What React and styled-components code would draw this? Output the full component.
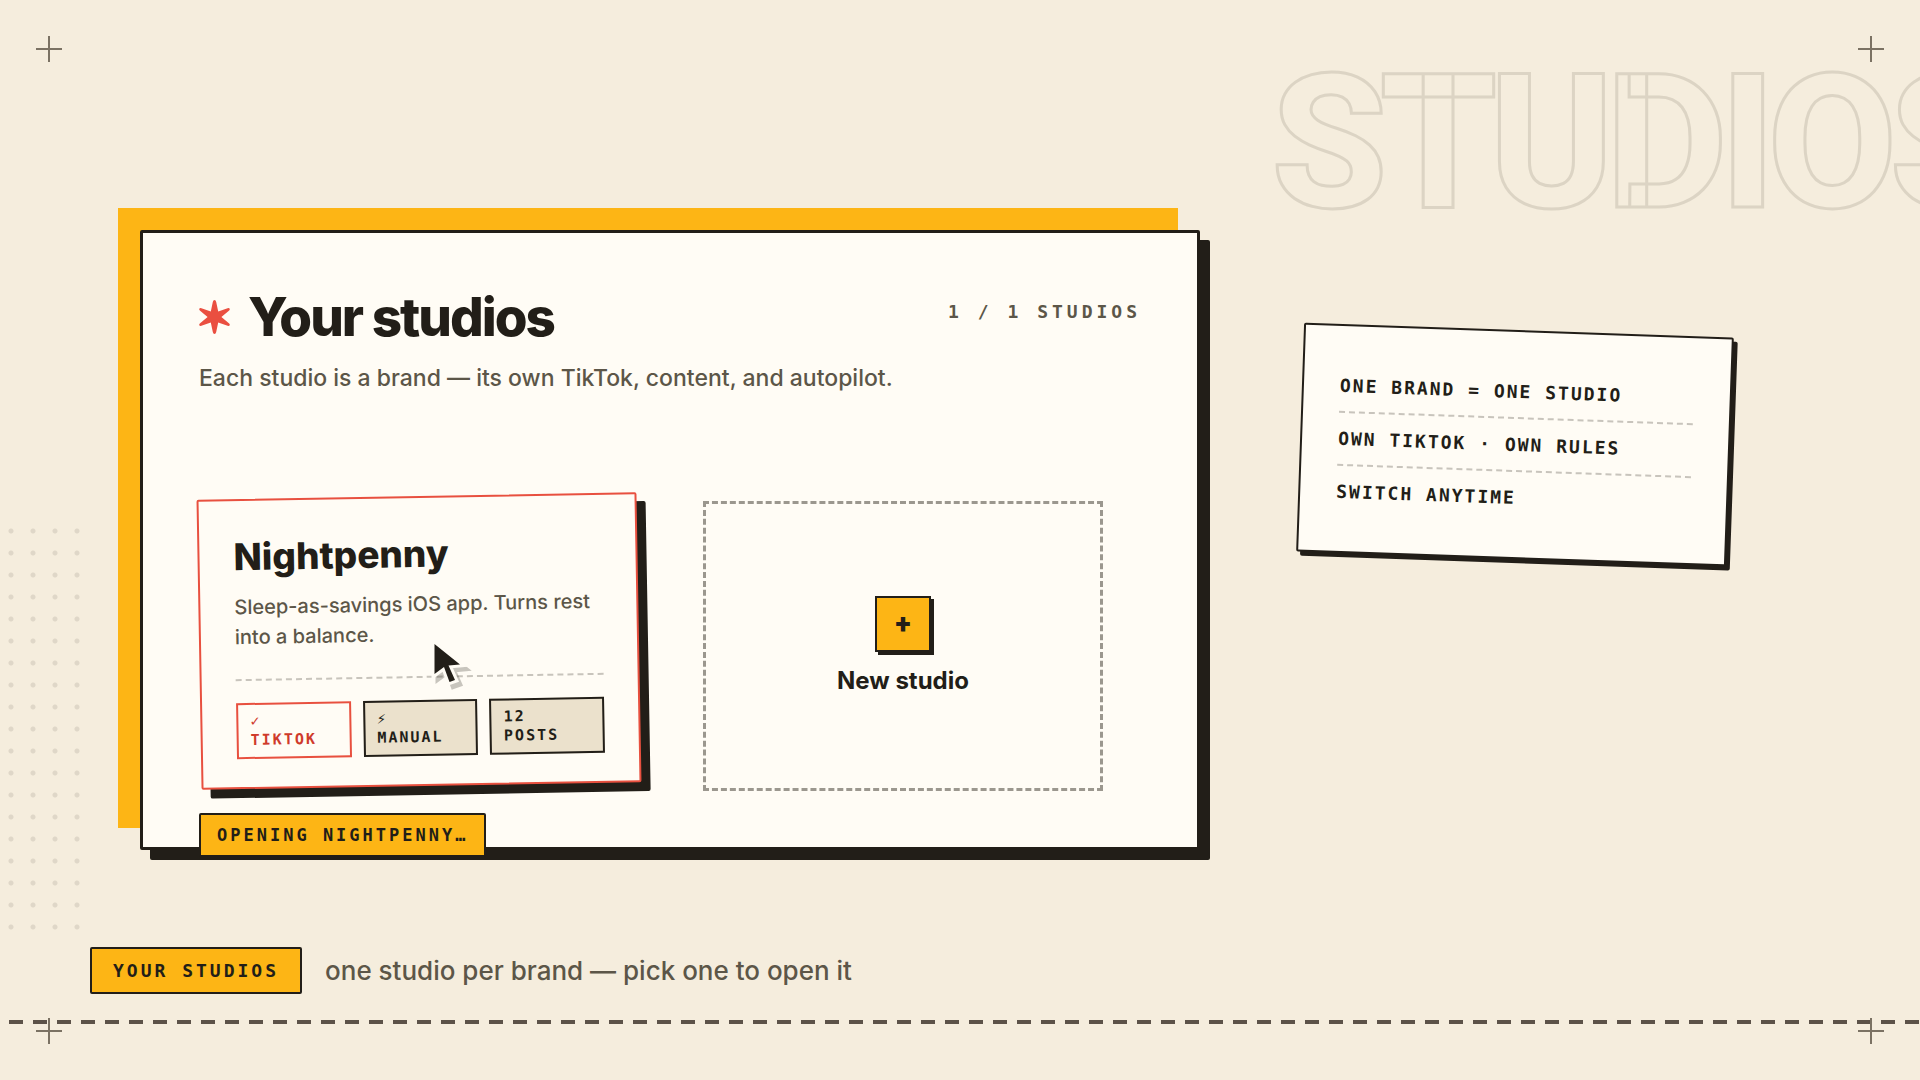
import styled, { createGlobalStyle } from 'styled-components'

const ink = '#221e18'
const paper = '#fffcf5'
const amber = '#fdb515'
const coral = '#e8503f'
const muted = '#5c5648'

const GlobalStyle = createGlobalStyle`
  body {
    margin: 0;
    background: #f5eddd;
    color: ${ink};
    font-family: Inter, 'Liberation Sans', sans-serif;
    font-weight: 500;
  }
  * {
    box-sizing: border-box;
  }
`

const mono = `
  font-family: 'DejaVu Sans Mono', 'Liberation Mono', monospace;
  font-weight: 700;
  text-transform: uppercase;
`

const Page = styled.div`
  position: relative;
  min-height: 100vh;
  display: flex;
  flex-direction: column;
  overflow: hidden;
`

const Backdrop = styled.div`
  position: absolute;
  top: 31px;
  left: 1271px;
  font-family: Roboto, 'Liberation Sans', sans-serif;
  font-size: 188px;
  line-height: 224px;
  font-weight: 800;
  letter-spacing: -8px;
  white-space: nowrap;
  color: transparent;
  -webkit-text-stroke: 3px #dcd4c4;
`

const Dots = styled.div`
  position: absolute;
  left: 0;
  top: 520px;
  width: 88px;
  height: 418px;
  background: radial-gradient(circle, #dfd7c8 2px, transparent 3px) 0 0 / 22px 22px;
`

const Cross = styled.svg`
  position: absolute;
  width: 26px;
  height: 26px;
  ${({ $v }) => $v}: 36px;
  ${({ $h }) => $h}: 36px;
  stroke: #7b7263;
  stroke-width: 2;
`

const Main = styled.main`
  position: relative;
  display: grid;
  grid-template-columns: minmax(0, 106fr) minmax(0, 43fr);
  column-gap: 100px;
  align-items: start;
  padding: 230px 190px 0 140px;
`

const PanelWrap = styled.div`
  position: relative;
  z-index: 0;
`

const Panel = styled.section`
  position: relative;
  padding: 56px;
  background: ${paper};
  border: 3px solid ${ink};
  border-radius: 2px;
  box-shadow: 10px 10px 0 ${ink};

  &::before {
    content: '';
    position: absolute;
    z-index: -1;
    inset: -25px 19px 19px -25px;
    background: ${amber};
  }
`

const Header = styled.header`
  display: flex;
  justify-content: space-between;
  align-items: flex-start;
`

const Title = styled.h1`
  display: flex;
  align-items: center;
  gap: 18px;
  margin: 0;
  font-size: 53px;
  line-height: 56px;
  font-weight: 800;
  letter-spacing: -2px;
`

const Star = styled.svg`
  width: 31px;
  height: 34px;
  fill: #ea4f40;
`

const Count = styled.span`
  ${mono}
  padding-top: 10px;
  font-size: 18px;
  line-height: 26px;
  letter-spacing: 4px;
  color: ${muted};
`

const Lead = styled.p`
  margin: 17px 0 0;
  font-size: 23px;
  line-height: 32px;
  color: ${muted};
`

const Cards = styled.div`
  display: grid;
  grid-template-columns: 440fr 400fr;
  gap: 64px;
  margin-top: 107px;
  padding-right: 38px;
`

const StudioCard = styled.article`
  padding: 36px 34px 28px;
  background: ${paper};
  border: 2px solid ${coral};
  border-radius: 2px;
  box-shadow: 9px 9px 0 ${ink};
  transform: translateY(-5px) rotate(-1deg);
`

const StudioName = styled.h2`
  margin: 0;
  font-size: 37px;
  line-height: 40px;
  font-weight: 800;
`

const About = styled.p`
  margin: 15px 0 0;
  font-size: 20px;
  line-height: 30px;
  color: ${muted};
`

const Chips = styled.ul`
  display: flex;
  gap: 12px;
  margin: 27px 0 0;
  padding: 22px 0 0;
  border-top: 2px dashed #c8c4bc;
  list-style: none;
`

const Chip = styled.li`
  ${mono}
  flex: 1 1 0;
  padding: 7px 12px;
  font-size: 15px;
  line-height: 19px;
  letter-spacing: 2px;
  border: 2px solid ${({ $on }) => ($on ? coral : ink)};
  background: ${({ $on }) => ($on ? paper : '#ebe1cc')};
  color: ${({ $on }) => ($on ? '#cf3a2b' : ink)};

  span {
    display: block;
  }
`

const NewStudio = styled.button`
  display: flex;
  flex-direction: column;
  align-items: center;
  justify-content: center;
  gap: 14px;
  border: 3px dashed #9b978e;
  background: none;
  color: ${ink};
  font: 700 24px/30px Inter, 'Liberation Sans', sans-serif;
  cursor: pointer;
`

const Plus = styled.span`
  width: 56px;
  height: 56px;
  border: 2px solid ${ink};
  background: ${amber};
  box-shadow: 3px 3px 0 ${ink};
  font-family: Roboto, 'Liberation Sans', sans-serif;
  font-size: 28px;
  line-height: 52px;
  font-weight: 900;
`

const Tag = styled.span`
  ${mono}
  border: 2px solid ${ink};
  border-radius: 2px;
  background: ${amber};
  padding: ${({ $large }) => ($large ? '10px 21px' : '9px 16px')};
  font-size: ${({ $large }) => ($large ? 18 : 17)}px;
  line-height: ${({ $large }) => ($large ? 23 : 22)}px;
  letter-spacing: 3px;
  white-space: nowrap;
`

const Toast = styled(Tag)`
  position: absolute;
  left: 56px;
  bottom: -10px;
`

const Pointer = styled.svg`
  position: absolute;
  left: 287px;
  top: 408px;
  width: 44px;
  height: 50px;
  overflow: visible;
  fill: ${ink};
  stroke: ${paper};
  stroke-width: 6;
  stroke-linejoin: miter;
  paint-order: stroke;
  filter: drop-shadow(4px 4px 0 rgba(34, 30, 24, 0.25));
`

const Note = styled.ul`
  margin: 100px 0 0;
  padding: 34px 36px;
  background: ${paper};
  border: 2px solid ${ink};
  border-radius: 2px;
  box-shadow: 4px 4px 0 ${ink};
  list-style: none;
  transform: rotate(2deg);
`

const NoteRow = styled.li`
  ${mono}
  padding: 14px 0;
  font-size: 18px;
  line-height: 23px;
  letter-spacing: 2px;

  & + & {
    border-top: 2px dashed #c8c4bc;
  }
`

const Footer = styled.footer`
  position: relative;
  margin-top: auto;
  padding-bottom: 56px;
`

const Caption = styled.div`
  display: flex;
  align-items: center;
  gap: 23px;
  padding: 0 90px 26px;
  font-size: 26px;
  line-height: 36px;
  color: ${muted};

  ${Tag} {
    color: ${ink};
  }
`

const Stitch = styled.div`
  height: 4px;
  background: repeating-linear-gradient(90deg, #5c5248 0 14px, transparent 14px 24px) 9px 0;
`

const corners = [
  ['top', 'left'],
  ['top', 'right'],
  ['bottom', 'left'],
  ['bottom', 'right'],
]

const chips = [
  { mark: '✓', label: 'TikTok', on: true },
  { mark: '⚡︎', label: 'Manual' },
  { mark: '12', label: 'Posts' },
]

const notes = ['One brand = one studio', 'Own TikTok · own rules', 'Switch anytime']

const App = () => {
  return (
    <Page>
      <GlobalStyle />
      <Backdrop aria-hidden="true">STUDIOS</Backdrop>
      <Dots />
      <Main>
        <PanelWrap>
          <Panel>
            <Header>
              <Title>
                <Star viewBox="0 0 31 34" aria-hidden="true">
                  <path d="M15.5 0 Q16.8 0 17.2 2 L19.2 11.6 L28.6 8.2 Q30.4 7.8 30.8 9 Q31 10 29.6 11 L22.4 17 L29.6 23 Q31 24 30.8 25 Q30.4 26.2 28.6 25.8 L19.2 22.4 L17.2 32 Q16.8 34 15.5 34 Q14.2 34 13.8 32 L11.8 22.4 L2.4 25.8 Q0.6 26.2 0.2 25 Q0 24 1.4 23 L8.6 17 L1.4 11 Q0 10 0.2 9 Q0.6 7.8 2.4 8.2 L11.8 11.6 L13.8 2 Q14.2 0 15.5 0 Z" />
                </Star>
                Your studios
              </Title>
              <Count>1 / 1 studios</Count>
            </Header>
            <Lead>Each studio is a brand — its own TikTok, content, and autopilot.</Lead>
            <Cards>
              <StudioCard>
                <StudioName>Nightpenny</StudioName>
                <About>Sleep-as-savings iOS app. Turns rest into a balance.</About>
                <Chips>
                  {chips.map(({ mark, label, on }) => (
                    <Chip key={label} $on={on}>
                      <span>{mark}</span>
                      {label}
                    </Chip>
                  ))}
                </Chips>
              </StudioCard>
              <NewStudio type="button">
                <Plus>+</Plus>
                New studio
              </NewStudio>
            </Cards>
            <Toast role="status">Opening Nightpenny…</Toast>
            <Pointer viewBox="0 0 44 50" aria-hidden="true">
              <path d="M4.5 3 V33 L14 26 L19.5 41 L25 39 L18.5 24.5 L30 23.5 Z" />
            </Pointer>
          </Panel>
        </PanelWrap>
        <Note>
          {notes.map((note) => (
            <NoteRow key={note}>{note}</NoteRow>
          ))}
        </Note>
      </Main>
      <Footer>
        <Caption>
          <Tag $large>Your studios</Tag>
          one studio per brand — pick one to open it
        </Caption>
        <Stitch />
      </Footer>
      {corners.map(([v, h]) => (
        <Cross key={v + h} $v={v} $h={h} viewBox="0 0 26 26" aria-hidden="true">
          <path d="M13 0 V26 M0 13 H26" />
        </Cross>
      ))}
    </Page>
  )
}

export default App
